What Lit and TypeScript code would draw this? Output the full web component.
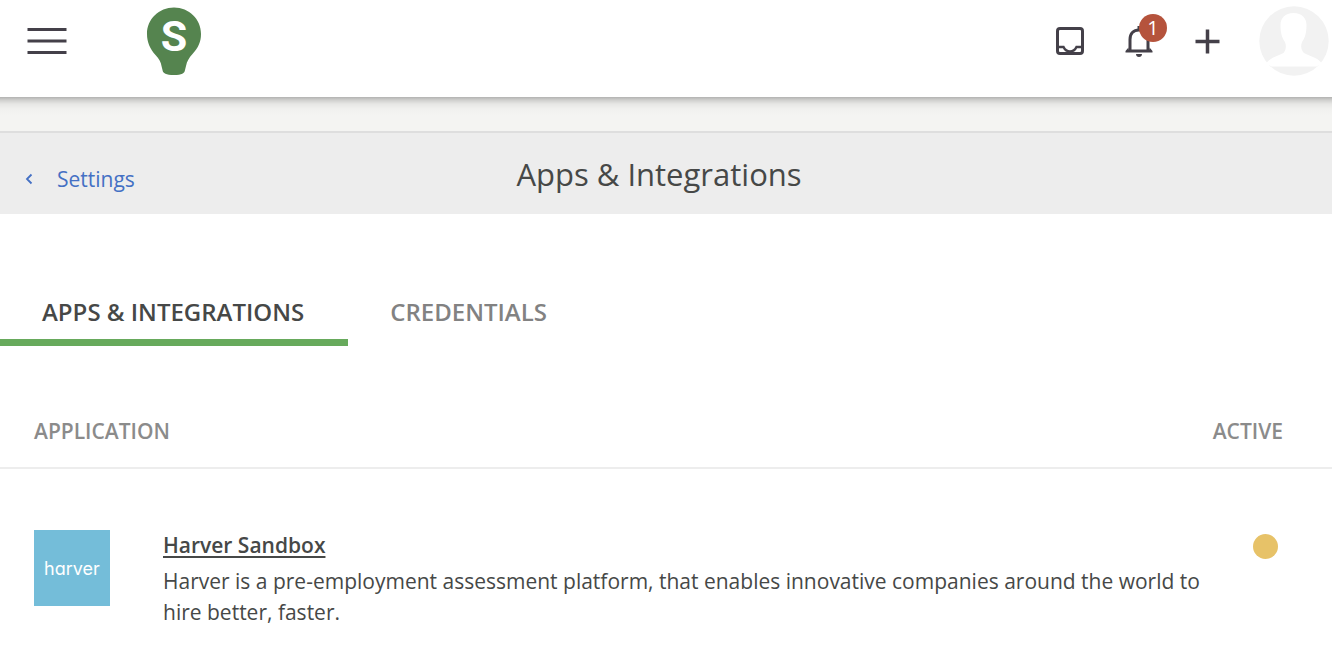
import { LitElement, html, css } from "lit";
import { customElement, property, state } from "lit/decorators.js";
import { classMap } from "lit/directives/class-map.js";

interface Integration {
  name: string;
  brand: string;
  description: string;
}

const INTEGRATIONS: Integration[] = [
  {
    name: "Harver Sandbox",
    brand: "harver",
    description:
      "Harver is a pre-employment assessment platform, that enables innovative companies around the world to hire better, faster.",
  },
];

const TABS = ["Apps & Integrations", "Credentials"];

@customElement("top-bar")
class TopBar extends LitElement {
  @property({ type: Number }) notifications = 0;

  static styles = css`
    :host {
      display: block;
      background: #fff;
    }
    .bar {
      display: flex;
      align-items: center;
      height: 97px;
      padding: 0 3px 15px 20px;
      box-sizing: border-box;
    }
    button {
      display: flex;
      align-items: center;
      justify-content: center;
      padding: 0;
      border: 0;
      background: none;
      color: #444049;
      font: inherit;
      cursor: pointer;
    }
    svg {
      display: block;
    }
    .menu {
      width: 54px;
      height: 48px;
    }
    .logo {
      margin-left: 72px;
    }
    .logo-letter {
      font: 700 43px Roboto, sans-serif;
      fill: #fff;
    }
    .actions {
      display: flex;
      align-items: center;
      margin-left: auto;
    }
    .action {
      position: relative;
      width: 69px;
      height: 56px;
    }
    .badge {
      position: absolute;
      top: 1px;
      right: 6px;
      width: 28px;
      height: 28px;
      border-radius: 50%;
      background: #b5533c;
      color: #fff;
      font-size: 20px;
      line-height: 28px;
      text-align: center;
    }
    .avatar {
      margin-left: 17px;
    }
  `;

  render() {
    return html`
      <header class="bar">
        <button class="menu" aria-label="Menu">
          <svg width="40" height="28" viewBox="0 0 40 28" stroke="currentColor" stroke-width="3">
            <path d="M0.5 2.5H39.5M0.5 14H39.5M0.5 25.5H39.5" />
          </svg>
        </button>
        <a class="logo" href="#" aria-label="Home">
          <svg width="56" height="70" viewBox="0 0 56 70">
            <path
              fill="#55844f"
              d="M28 1.500C13 1.500 1 13 1 28C1 36 4 43 9.500 49C13 53 15 56 15.500 60L16.500 64C17 67.500 20 69 28 69S38.500 67.500 39 64L40 60C41 55 43 52 46.500 48C52 42 55 36 55 28C55 13 43 1.500 28 1.500Z"
            />
            <text class="logo-letter" x="28" y="45" text-anchor="middle">S</text>
          </svg>
        </a>
        <nav class="actions" aria-label="Account">
          <button class="action" aria-label="Inbox">
            <svg width="28" height="28" viewBox="0 0 28 28" fill="none" stroke="currentColor" stroke-width="3">
              <rect x="1.5" y="1.500" width="25" height="25" rx="2.5" />
              <path stroke-width="2.500" d="M2 20H7.500C9 23 11 24.500 14 24.500S19 23 20.500 20H26" />
            </svg>
          </button>
          <button class="action" aria-label="Notifications">
            <svg width="28" height="32" viewBox="0 0 28 32" fill="none" stroke="currentColor">
              <path stroke-width="3" d="M5 25V14.500C5 8.500 8.500 5 14 5S23 8.500 23 14.500V25" />
              <path fill="currentColor" stroke="none" d="M3.500 22.500L0.500 26V27.500H27.500V26L24.500 22.500V24.500H3.500ZM11 29H17C17 31 15.800 32 14 32S11 31 11 29ZM12.500 1H15.500V5H12.500Z" />
            </svg>
            ${this.notifications ? html`<span class="badge">${this.notifications}</span>` : null}
          </button>
          <button class="action" aria-label="Add">
            <svg width="25" height="25" viewBox="0 0 25 25" stroke="currentColor" stroke-width="3.500">
              <path d="M0.500 12.500H24.500M12.500 0.500V24.500" />
            </svg>
          </button>
          <button class="avatar" aria-label="Profile">
            <svg width="70" height="70" viewBox="0 0 70 70">
              <circle cx="35" cy="35" r="34.700" fill="#f2f2f2" />
              <path
                fill="#fff"
                d="M34.500 7C26 7 21.500 12 21.500 19C21.500 27 23 32 26 36C27.500 40 27 44 24.500 47C19 50 12 51 7.500 57Q10 60 12.500 60.500H57.500Q60 60 62.500 57C58 51 50 50 45 47C42 44 41.500 40 43 36C46 32 47.500 27 47.500 19C47.500 12 43 7 34.500 7Z"
              />
            </svg>
          </button>
        </nav>
      </header>
    `;
  }
}

@customElement("page-heading")
class PageHeading extends LitElement {
  static styles = css`
    :host {
      display: block;
    }
    .bar {
      display: grid;
      grid-template-columns: 1fr auto 1fr;
      align-items: center;
      height: 83px;
      box-sizing: border-box;
      padding: 0 38px 0 24px;
      border-top: 2px solid #dedede;
      background: #ededed;
    }
    .back {
      display: flex;
      align-items: center;
      gap: 23px;
      padding-top: 10px;
      color: #4470c4;
      font-size: 21px;
      line-height: 30px;
      text-decoration: none;
    }
    h1 {
      margin: 0;
      color: #464847;
      font-size: 31px;
      font-weight: 400;
      line-height: 44px;
    }
  `;

  render() {
    return html`
      <div class="bar">
        <a class="back" href="#settings">
          <svg width="10" height="12" viewBox="0 0 10 12" fill="none" stroke="currentColor" stroke-width="1.800">
            <path d="M7.500 1.500L3 6L7.500 10.500" />
          </svg>
          Settings
        </a>
        <h1>Apps &amp; Integrations</h1>
      </div>
    `;
  }
}

@customElement("integration-table")
class IntegrationTable extends LitElement {
  @property({ attribute: false }) items: Integration[] = [];

  static styles = css`
    :host {
      display: block;
    }
    table {
      width: 100%;
      border-collapse: collapse;
    }
    th {
      padding: 0 0 21px 34px;
      border-bottom: 2px solid #ededed;
      color: #8b8b8b;
      font-size: 21px;
      font-weight: 600;
      line-height: 30px;
      text-align: left;
      text-transform: uppercase;
    }
    .status-head {
      padding: 0 49px 21px 0;
      text-align: right;
    }
    td {
      padding: 61px 0 20px;
      vertical-align: top;
    }
    .brand-cell {
      width: 76px;
      padding-left: 34px;
      padding-right: 53px;
    }
    .brand {
      display: flex;
      align-items: center;
      justify-content: center;
      width: 76px;
      height: 76px;
      background: #74bdd9;
      color: #fff;
      font-family: Inter, sans-serif;
      font-feature-settings: "cv11";
      font-size: 18px;
    }
    .name {
      color: #464847;
      font-size: 21px;
      font-weight: 600;
      line-height: 31px;
      text-underline-offset: 3px;
    }
    p {
      margin: 5px 0 0;
      color: #464847;
      font-size: 21px;
      line-height: 31px;
    }
    .status-cell {
      padding-top: 65px;
      padding-right: 54px;
    }
    .dot {
      display: block;
      width: 25px;
      height: 25px;
      margin-left: auto;
      border-radius: 50%;
      background: #e7c268;
    }
  `;

  render() {
    return html`
      <table>
        <thead>
          <tr>
            <th colspan="2" scope="col">Application</th>
            <th class="status-head" scope="col">Active</th>
          </tr>
        </thead>
        <tbody>
          ${this.items.map(
            (item) => html`
              <tr>
                <td class="brand-cell"><span class="brand">${item.brand}</span></td>
                <td>
                  <a class="name" href="#app">${item.name}</a>
                  <p>${item.description}</p>
                </td>
                <td class="status-cell"><span class="dot" role="img" aria-label="Pending"></span></td>
              </tr>
            `
          )}
        </tbody>
      </table>
    `;
  }
}

@customElement("app-root")
class AppRoot extends LitElement {
  @state() private selected = 0;

  static styles = css`
    :host {
      display: block;
      min-height: 100vh;
      background: #fff;
      font-family: "Open Sans", sans-serif;
    }
    .spacer {
      height: 34px;
      background: linear-gradient(#b2b2b1, #cfcfcd 3px, #e7e7e5 7px, #f1f1ef 12px, #f4f4f2 18px);
    }
    .tabs {
      display: flex;
      margin: 64px 0 70px;
    }
    .tab {
      padding: 16px 44px 9px 42px;
      border: 0;
      border-bottom: 7px solid transparent;
      background: none;
      color: #828282;
      font: 600 24px/36px "Open Sans", sans-serif;
      text-transform: uppercase;
      cursor: pointer;
    }
    .selected {
      border-bottom-color: #67aa5c;
      color: #464847;
    }
  `;

  render() {
    return html`
      <top-bar .notifications=${1}></top-bar>
      <div class="spacer"></div>
      <page-heading></page-heading>
      <main>
        <div class="tabs" role="tablist">
          ${TABS.map(
            (label, i) => html`<button
              role="tab"
              aria-selected=${i === this.selected}
              class=${classMap({ tab: true, selected: i === this.selected })}
              @click=${() => (this.selected = i)}
            >
              ${label}
            </button>`
          )}
        </div>
        <integration-table .items=${INTEGRATIONS}></integration-table>
      </main>
    `;
  }
}
